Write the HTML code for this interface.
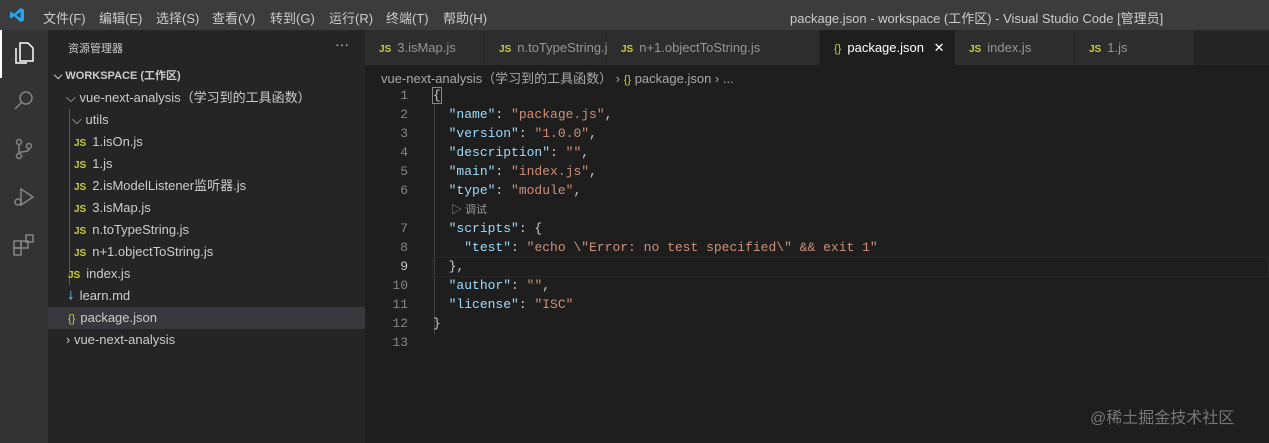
<!DOCTYPE html>
<html><head><meta charset="utf-8"><style>
*{margin:0;padding:0;box-sizing:border-box}
body{width:1269px;height:443px;background:#1e1e1e;font-family:"Liberation Sans","Noto Sans CJK SC",sans-serif;font-size:13px;color:#ccc;position:relative;overflow:hidden}
.abs{position:absolute}
#title{left:0;top:0;width:1269px;height:30px;background:#3c3c3c}
#title span{position:absolute;top:8px;font-size:13px;color:#ccc}
#act{left:0;top:30px;width:48px;height:413px;background:#333}
#side{left:48px;top:30px;width:317px;height:413px;background:#252526}
.row{position:absolute;left:0;width:317px;height:22px;line-height:22px;white-space:nowrap}
.js{color:#cbcb41;font-weight:bold;font-size:10px;margin-right:6px}
#tabs{left:365px;top:30px;width:904px;height:35px;background:#252526}
.tab{position:absolute;top:0;height:35px;line-height:35px;background:#2d2d2d;color:#969696;padding-left:14px;border-right:1px solid #252526;white-space:nowrap}
.code{font-family:"Liberation Mono",monospace;font-size:13px;white-space:pre}
.ln{position:absolute;left:380px;width:28px;text-align:right;color:#858585}
.cl{position:absolute;left:433px}
.k{color:#9cdcfe}.s{color:#ce9178}
</style></head><body>
<div id="title" class="abs">
<svg class="abs" style="left:9px;top:7px" width="16" height="16" viewBox="0 0 16 16"><path d="M11.5 1L5 7 2 4.6 1 5.2v5.6l1 .6L5 9l6.5 6 3.5-1.6V2.6z" fill="#23a9f2"/><path d="M11.5 4.8v6.4L7.3 8z" fill="#3c3c3c"/></svg>
<span style="left:43px">文件(F)</span><span style="left:99px">编辑(E)</span><span style="left:156px">选择(S)</span><span style="left:212px">查看(V)</span><span style="left:270px">转到(G)</span><span style="left:329px">运行(R)</span><span style="left:386px">终端(T)</span><span style="left:443px">帮助(H)</span>
<span style="left:790px">package.json - workspace (工作区) - Visual Studio Code [管理员]</span>
</div>
<div id="act" class="abs">
<div class="abs" style="left:0;top:0;width:2px;height:48px;background:#fff"></div>
<svg class="abs" style="left:12px;top:11px" width="24" height="24" viewBox="0 0 24 24" fill="none" stroke="#fff" stroke-width="1.5"><path d="M8 2h8l5 5v13H8z"/><path d="M4 7v15h11"/></svg>
<svg class="abs" style="left:12px;top:59px" width="24" height="24" viewBox="0 0 24 24" fill="none" stroke="#858585" stroke-width="1.5"><circle cx="14" cy="9" r="6"/><path d="M10 13l-7 7"/></svg>
<svg class="abs" style="left:12px;top:107px" width="24" height="24" viewBox="0 0 24 24" fill="none" stroke="#858585" stroke-width="1.5"><circle cx="7" cy="5" r="2.5"/><circle cx="7" cy="19" r="2.5"/><circle cx="17" cy="9" r="2.5"/><path d="M7 8v8M17 12c0 4-10 2-10 4"/></svg>
<svg class="abs" style="left:12px;top:155px" width="24" height="24" viewBox="0 0 24 24" fill="none" stroke="#858585" stroke-width="1.5"><path d="M9 4l12 8-12 8z"/><circle cx="6" cy="17" r="3"/></svg>
<svg class="abs" style="left:12px;top:203px" width="24" height="24" viewBox="0 0 24 24" fill="none" stroke="#858585" stroke-width="1.5"><rect x="2" y="8" width="7" height="7"/><rect x="9" y="8" width="7" height="7"/><rect x="2" y="15" width="7" height="7"/><rect x="14" y="2" width="7" height="7"/></svg>
</div>
<div id="side" class="abs">
<div class="abs" style="left:20px;top:10px;font-size:11px">资源管理器</div>
<div class="abs" style="left:287px;top:6px;font-size:14px">···</div>
<div class="row" style="top:35px;padding-left:6px;font-weight:bold;font-size:11px">⌵ WORKSPACE (工作区)</div>
<div class="row" style="top:57px;padding-left:18px">⌵ vue-next-analysis（学习到的工具函数）</div>
<div class="abs" style="left:21px;top:79px;width:1px;height:176px;background:#585858"></div>
<div class="row" style="top:79px;padding-left:24px">⌵ utils</div>
<div class="row" style="top:101px;padding-left:26px"><span class="js">JS</span>1.isOn.js</div>
<div class="row" style="top:123px;padding-left:26px"><span class="js">JS</span>1.js</div>
<div class="row" style="top:145px;padding-left:26px"><span class="js">JS</span>2.isModelListener监听器.js</div>
<div class="row" style="top:167px;padding-left:26px"><span class="js">JS</span>3.isMap.js</div>
<div class="row" style="top:189px;padding-left:26px"><span class="js">JS</span>n.toTypeString.js</div>
<div class="row" style="top:211px;padding-left:26px"><span class="js">JS</span>n+1.objectToString.js</div>
<div class="row" style="top:233px;padding-left:20px"><span class="js">JS</span>index.js</div>
<div class="row" style="top:255px;padding-left:20px"><span style="color:#519aba;margin-right:6px">🠗</span>learn.md</div>
<div class="row" style="top:277px;padding-left:20px;background:#37373d"><span style="color:#cbcb41;margin-right:5px;font-size:11px">{}</span>package.json</div>
<div class="row" style="top:299px;padding-left:18px">› vue-next-analysis</div>
</div>
<div id="tabs" class="abs">
<div class="tab" style="left:0;width:120px"><span class="js">JS</span>3.isMap.js</div>
<div class="tab" style="left:120px;width:122px"><span class="js">JS</span>n.toTypeString.js</div>
<div class="tab" style="left:242px;width:213px"><span class="js">JS</span>n+1.objectToString.js</div>
<div class="tab" style="left:455px;width:135px;background:#1e1e1e;color:#fff"><span style="color:#cbcb41;margin-right:6px;font-size:11px">{}</span>package.json <span style="margin-left:6px">✕</span></div>
<div class="tab" style="left:590px;width:120px"><span class="js">JS</span>index.js</div>
<div class="tab" style="left:710px;width:120px"><span class="js">JS</span>1.js</div>
</div>
<div class="abs" style="left:381px;top:68px;color:#a9a9a9;white-space:nowrap">vue-next-analysis（学习到的工具函数） › <span style="color:#cbcb41;font-size:11px">{}</span> package.json › ...</div>
<div class="abs" style="left:434px;top:104px;width:1px;height:230px;background:#404040"></div>
<div class="abs" style="left:432px;top:257px;width:837px;height:20px;border:1px solid #282828"></div>
<div class="code">
<div class="ln" style="top:88px">1</div><div class="cl" style="top:88px;outline:1px solid #888">{</div>
<div class="ln" style="top:107px">2</div><div class="cl" style="top:107px">  <span class="k">"name"</span>: <span class="s">"package.js"</span>,</div>
<div class="ln" style="top:126px">3</div><div class="cl" style="top:126px">  <span class="k">"version"</span>: <span class="s">"1.0.0"</span>,</div>
<div class="ln" style="top:145px">4</div><div class="cl" style="top:145px">  <span class="k">"description"</span>: <span class="s">""</span>,</div>
<div class="ln" style="top:164px">5</div><div class="cl" style="top:164px">  <span class="k">"main"</span>: <span class="s">"index.js"</span>,</div>
<div class="ln" style="top:183px">6</div><div class="cl" style="top:183px">  <span class="k">"type"</span>: <span class="s">"module"</span>,</div>
<div class="abs" style="left:451px;top:201px;font-family:'Liberation Sans','Noto Sans CJK SC',sans-serif;font-size:11px;color:#999">▷ 调试</div>
<div class="ln" style="top:221px">7</div><div class="cl" style="top:221px">  <span class="k">"scripts"</span>: {</div>
<div class="ln" style="top:240px">8</div><div class="cl" style="top:240px">    <span class="k">"test"</span>: <span class="s">"echo \"Error: no test specified\" &amp;&amp; exit 1"</span></div>
<div class="ln" style="top:259px;color:#c6c6c6">9</div><div class="cl" style="top:259px">  },</div>
<div class="ln" style="top:278px">10</div><div class="cl" style="top:278px">  <span class="k">"author"</span>: <span class="s">""</span>,</div>
<div class="ln" style="top:297px">11</div><div class="cl" style="top:297px">  <span class="k">"license"</span>: <span class="s">"ISC"</span></div>
<div class="ln" style="top:316px">12</div><div class="cl" style="top:316px">}</div>
<div class="ln" style="top:335px">13</div>
</div>
<div class="abs" style="left:1090px;top:404px;font-size:16px;color:#777">@稀土掘金技术社区</div>
</body></html>
